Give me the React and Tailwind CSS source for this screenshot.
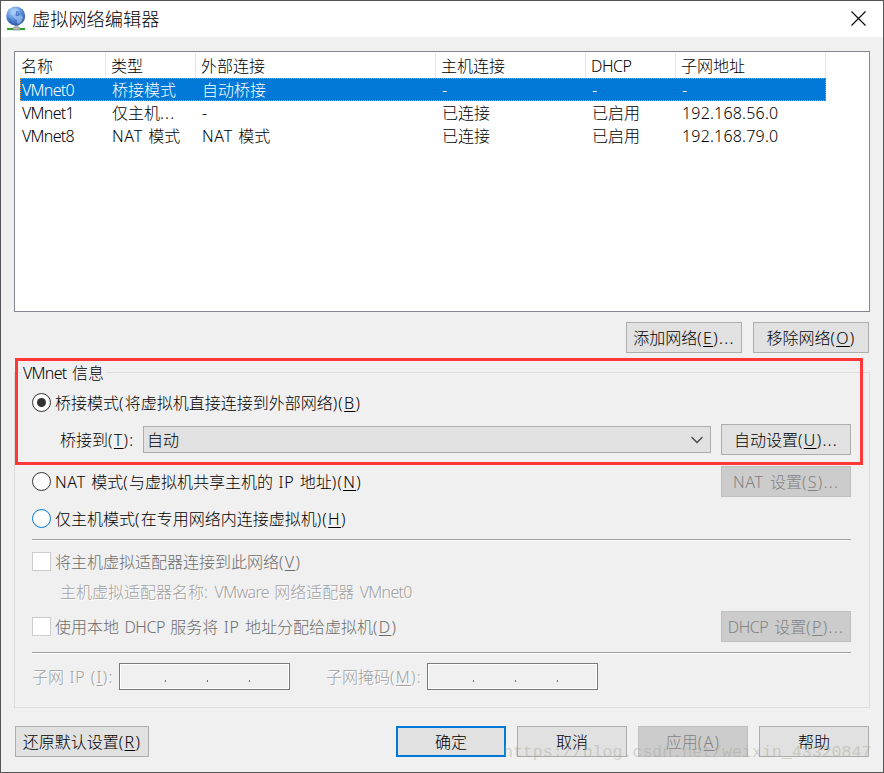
import React from "react";

const columns = ["名称", "类型", "外部连接", "主机连接", "DHCP", "子网地址"];

const networks = [
	["VMnet0", "桥接模式", "自动桥接", "-", "-", "-"],
	["VMnet1", "仅主机...", "-", "已连接", "已启用", "192.168.56.0"],
	["VMnet8", "NAT 模式", "NAT 模式", "已连接", "已启用", "192.168.79.0"],
];

const tracking = (part) => {
	if (/^VM/.test(part)) return "tracking-[-0.7px]";
	if (/^DHCP/.test(part)) return "tracking-[-0.5px]";
	if (/^[A-Z]/.test(part)) return "tracking-[0.7px]";
	if (/^\d/.test(part)) return "tracking-[0.2px]";
	return "tracking-[1.2px]";
};

// Latin words, numbers and punctuation are spaced differently from the CJK glyphs
const Text = ({ children }) =>
	children.split(/([A-Za-z]{2,}\d?|[\d.]{5,}|[().:]+)/).map((part, index) =>
		index % 2 ? (
			<span key={index} className={tracking(part)}>
				{part}
			</span>
		) : (
			part
		)
	);

const Key = ({ children, after = "" }) => (
	<span className="tracking-[1.3px]">
		(<span className="underline decoration-1 underline-offset-2">{children}</span>){after}
	</span>
);

const Button = ({ className = "", disabled, primary, children }) => {
	let look = "border border-[#adadad] bg-[#e1e1e1]";
	if (disabled) look = "border border-[#bfbfbf] bg-[#cccccc] text-[#838383]";
	if (primary) look = "border-2 border-[#0078d7] bg-[#e1e1e1]";
	return (
		<button
			className={`flex h-[31px] shrink-0 items-center justify-center whitespace-nowrap [word-spacing:2px] ${look} ${className}`}
		>
			<span>{children}</span>
		</button>
	);
};

const Radio = ({ checked, hot, children }) => (
	<label className="flex h-[19px] items-center gap-1 whitespace-nowrap">
		<span
			className={`flex size-[19px] items-center justify-center rounded-full border bg-white ${
				hot ? "border-[#0078d7]" : "border-[#333333]"
			}`}
		>
			{checked && <span className="size-[9px] rounded-full bg-[#333333]" />}
		</span>
		<span>{children}</span>
	</label>
);

const Checkbox = ({ children }) => (
	<label className="flex h-[19px] items-center gap-1 whitespace-nowrap text-[#6d6d6d]">
		<span className="size-[19px] border border-[#cccccc] bg-white" />
		<span>{children}</span>
	</label>
);

const Separator = () => <div className="h-[2px] border-t border-b border-t-[#a0a0a0] border-b-white" />;

const IpField = () => (
	<div className="flex h-[27px] w-[171px] items-end border border-[#7a7a7a] pb-[7px] pl-[45px] shadow-[inset_0_0_0_1px_#ffffff]">
		<div className="flex gap-[41px]">
			<span className="h-[2px] w-px bg-[#6d6d6d]" />
			<span className="h-[2px] w-px bg-[#6d6d6d]" />
			<span className="h-[2px] w-px bg-[#6d6d6d]" />
		</div>
	</div>
);

const GlobeIcon = () => (
	<svg width="20" height="26" viewBox="0 0 20 26">
		<defs>
			<radialGradient id="globe" cx="0.38" cy="0.25" r="0.8">
				<stop offset="0" stopColor="#b5d5fa" />
				<stop offset="0.45" stopColor="#6398e2" />
				<stop offset="1" stopColor="#2450a0" />
			</radialGradient>
		</defs>
		<path d="M1 23h18" stroke="#2ca32c" strokeWidth="2.2" />
		<path d="M7 24v-2l2-1v-2h3v2l2 1v2z" fill="#b5b5b5" stroke="#777" strokeWidth="0.5" />
		<circle cx="9.7" cy="10" r="9.5" fill="url(#globe)" />
		<path
			d="M6 4l4-2 3 2-1 2-2 0-1 3 3 1 3-1 2 2-1 4-3 3-2-1 0-3-3-2-2-3-2-1z"
			fill="#a9cdf5"
			opacity="0.6"
		/>
		<path d="M1.5 12q3 1 4 5M11 5l2 4-3 1z" stroke="#2455ab" fill="none" opacity="0.6" />
	</svg>
);

const TitleBar = () => (
	<div className="flex h-[36px] items-center bg-white pr-4 pl-[5px]">
		<GlobeIcon />
		<span className="ml-[6px] grow text-[18.2px]">虚拟网络编辑器</span>
		<svg width="16" height="16" viewBox="0 0 16 16" stroke="#000" strokeWidth="1.1">
			<path d="M0.500 0.500l14 14M14.500 0.500l-14 14" />
		</svg>
	</div>
);

const NetworkList = () => (
	<div className="h-[261px] border border-[#828790] bg-white pt-px">
		<div className="grid h-[25px] grid-cols-[91px_90px_240px_150px_90px_150px]">
			{columns.map((name, index) => (
				<div
					key={name}
					className={`flex items-center border-r border-[#e5e5e5] ${
						index === 0 ? "pl-[6px]" : "pl-[5px]"
					}`}
				>
					<span>
						<Text>{name}</Text>
					</span>
				</div>
			))}
		</div>
		{networks.map((row, index) => (
			<div key={row[0]} className="pl-[5px]">
				<div
					className={`h-[23px] w-[806px] border ${
						index === 0
							? "border-dotted border-[#ff8728] bg-[#0078d7] text-white"
							: "border-transparent"
					}`}
				>
					<div className="grid h-[21px] grid-cols-[85px_90px_240px_150px_90px_149px]">
						{row.map((cell, col) => (
							<div
								key={col}
								className={`flex items-center whitespace-nowrap ${
									col === 0 ? "pl-px" : "pl-[6px]"
								}`}
							>
								<span>
									<Text>{cell}</Text>
								</span>
							</div>
						))}
					</div>
				</div>
			</div>
		))}
	</div>
);

const VmnetInfo = () => (
	<fieldset className="relative mt-[5px] h-[350px] pt-[14px]">
		<div className="h-[336px] border border-[#dcdcdc] pt-5 pr-[18px] pl-[17px]">
			<Radio checked>
				<Text>桥接模式(将虚拟机直接连接到外部网络)</Text>
				<Key>B</Key>
			</Radio>
			<div className="mt-3 flex h-[31px] items-center">
				<span className="w-[111px] shrink-0 pl-[28px] whitespace-nowrap">
					桥接到
					<Key after=":">T</Key>
				</span>
				<div className="flex h-[27px] w-[568px] shrink-0 items-center justify-between border border-[#adadad] bg-[#e1e1e1] pr-[6px] pl-[3px]">
					<span>自动</span>
					<svg width="14" height="8" viewBox="0 0 14 8" fill="none" stroke="#444">
						<path d="M1.5 1l5.5 5.5L12.500 1" strokeWidth="1.3" />
					</svg>
				</div>
				<Button className="ml-[10px] w-[130px]">
					自动设置
					<Key after="...">U</Key>
				</Button>
			</div>
			<div className="mt-[11px] flex h-[31px] items-center justify-between">
				<Radio>
					<Text>NAT 模式(与虚拟机共享主机的 IP 地址)</Text>
					<Key>N</Key>
				</Radio>
				<Button disabled className="w-[130px]">
					<Text>NAT 设置</Text>
					<Key after="...">S</Key>
				</Button>
			</div>
			<div className="mt-3 mb-[11px]">
				<Radio hot>
					<Text>仅主机模式(在专用网络内连接虚拟机)</Text>
					<Key>H</Key>
				</Radio>
			</div>
			<Separator />
			<div className="mt-[11px]">
				<Checkbox>
					将主机虚拟适配器连接到此网络
					<Key>V</Key>
				</Checkbox>
			</div>
			<div className="mt-[9px] flex h-6 items-center pl-[28px] text-[#a0a0a0] [text-shadow:1px_1px_0_#fff]">
				<span>
					<Text>主机虚拟适配器名称: VMware 网络适配器 VMnet0</Text>
				</span>
			</div>
			<div className="mt-[7px] flex h-[31px] items-center justify-between">
				<Checkbox>
					<Text>使用本地 DHCP 服务将 IP 地址分配给虚拟机</Text>
					<Key>D</Key>
				</Checkbox>
				<Button disabled className="w-[130px]">
					<Text>DHCP 设置</Text>
					<Key after="...">P</Key>
				</Button>
			</div>
			<div className="mt-[10px]">
				<Separator />
			</div>
			<div className="mt-[9px] flex items-center text-[#a0a0a0] [text-shadow:1px_1px_0_#fff]">
				<span className="w-[87px] whitespace-nowrap">
					<Text>子网 IP </Text>
					<Key after=":">I</Key>
				</span>
				<IpField />
				<span className="ml-[36px] w-[101px] whitespace-nowrap">
					子网掩码
					<Key after=":">M</Key>
				</span>
				<IpField />
			</div>
		</div>
		<legend className="absolute top-[3px] left-[7px] bg-[#f0f0f0] pr-[3px] pl-[2px] leading-6">
			<Text>VMnet 信息</Text>
		</legend>
		{/* highlight around the bridged mode settings */}
		<div className="absolute top-0 left-px h-[107px] w-[848px] border-3 border-[#ff3737]" />
	</fieldset>
);

export default function App() {
	return (
		<div className="relative h-[773px] w-[884px] overflow-hidden border border-[#555555] bg-[#f0f0f0] font-['Noto_Sans','Noto_Sans_CJK_SC',sans-serif] text-[16px] leading-[22px] font-light text-black [word-spacing:1.3px]">
			<TitleBar />
			<main className="pt-[14px] pr-[13px] pl-[13px]">
				<NetworkList />
				<div className="mt-[10px] flex justify-end gap-[11px] pr-px">
					<Button className="w-[116px]">
						添加网络
						<Key after="...">E</Key>
					</Button>
					<Button className="w-[116px]">
						移除网络
						<Key>O</Key>
					</Button>
				</div>
				<VmnetInfo />
				<div className="mt-[18px] flex gap-[11px] pl-px">
					<Button className="mr-[236px] w-[134px]">
						还原默认设置
						<Key>R</Key>
					</Button>
					<Button primary className="w-[110px]">
						确定
					</Button>
					<Button className="w-[110px]">取消</Button>
					<Button disabled className="w-[110px]">
						应用
						<Key>A</Key>
					</Button>
					<Button className="w-[110px]">帮助</Button>
				</div>
			</main>
			<div className="absolute top-[741px] left-[502px] font-['Liberation_Mono',monospace] text-[16.6px] whitespace-nowrap text-[#a0a090]/40 [word-spacing:0]">
				https://blog.csdn.net/weixin_43320847
			</div>
		</div>
	);
}
